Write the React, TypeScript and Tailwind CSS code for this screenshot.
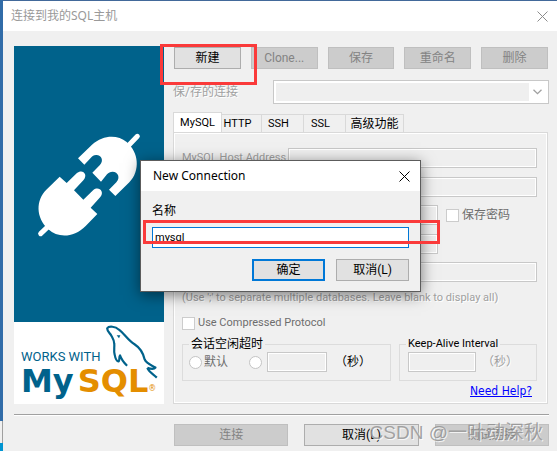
import type { ReactNode } from "react";

const uiFont = "font-['Noto_Sans','Noto_Sans_CJK_SC',sans-serif]";
const formFont = "font-['Roboto','Noto_Sans_CJK_SC',sans-serif]";
const engraved = "text-[#a0a0a0] [text-shadow:1px_1px_0_#fff]";
const fieldStyle =
  "block h-5 min-w-0 border border-[#c8c8c8] bg-[#efefef] px-1 text-[11px] shadow-[inset_0_0_0_1px_#fff] outline-none";

type PushButtonProps = { children: ReactNode; disabled?: boolean; primary?: boolean; className?: string };

function PushButton({ children, disabled, primary, className = "" }: PushButtonProps) {
  const tone = disabled
    ? "border border-[#bfbfbf] bg-[#cccccc] text-[#838383]"
    : primary
      ? "border-2 border-[#0078d7] bg-[#e1e1e1] text-black"
      : "border border-[#adadad] bg-[#e1e1e1] text-black";
  return (
    <button
      type="button"
      disabled={disabled}
      className={`flex h-[22px] items-center justify-center text-[12px] leading-4 whitespace-nowrap ${formFont} ${tone} ${className}`}
    >
      {children}
    </button>
  );
}

function CloseIcon({ className }: { className: string }) {
  return (
    <svg viewBox="0 0 11 11" className={`size-[11px] ${className}`} fill="none" stroke="currentColor">
      <path d="M.5 .5l10 10M10.5 .5l-10 10" />
    </svg>
  );
}

function PlugArt() {
  return (
    <svg viewBox="42 -222 450 828" className="block h-[276px] w-[150px]" aria-hidden="true">
      <g fill="#fff">
        <path d="M234 115L276 74C310 44 352 43 380 66C416 96 422 152 388 187L346 228L327 209L349 187C362 173 354 155 338 155C330 155 326 158 321 163L303 185L277 158L299 136C313 122 304 104 288 105C281 105 277 109 272 114L253 134Z" />
        <path d="M179 170L200 189L230 160C247 145 266 163 250 181L222 211L250 239L280 210C296 197 315 215 301 231L272 263L292 282L257 318C221 354 174 355 145 328C107 292 107 241 139 209Z" />
      </g>
      <g stroke="#fff" strokeWidth="15" strokeLinecap="round">
        <path d="M382 80L412 49M148 316L122 341" />
      </g>
    </svg>
  );
}

function Dolphin() {
  return (
    <svg viewBox="290 30 156 160" className="block h-[54px] w-[53px]" fill="none" aria-hidden="true">
      <path
        d="M412 157C421 160 432 162 436 156C424 149 408 144 404 132C400 114 391 98 374 87C354 75 345 57 328 44C317 34 298 32 293 40C293 49 301 54 305 61C309 69 314 74 314 86C315 96 312 105 315 117C317 128 321 137 326 138C331 137 327 125 331 120C335 132 345 144 352 151M412 157C416 169 429 175 440 186"
        stroke="#00628b"
        strokeWidth="6.5"
        strokeLinejoin="round"
      />
      <path d="M321 60l11 0l-4 9z" fill="#00628b" />
    </svg>
  );
}

function BrandPanel() {
  return (
    <aside className="flex w-[150px] shrink-0 flex-col bg-[#00628b]">
      <div className="flex-1">
        <PlugArt />
      </div>
      <div className="h-[82px] bg-white pt-[3px] pl-[7px] text-[#00628b]">
        <div className="flex h-[42px] items-start justify-between pr-[5px]">
          <span className="pt-[22px] font-['Roboto',sans-serif] text-[13px] leading-5 whitespace-nowrap">
            WORKS WITH
          </span>
          <Dolphin />
        </div>
        <div className="flex items-end font-['DejaVu_Sans',sans-serif] text-[32px] leading-7 font-bold">
          <span>My</span>
          <span className="ml-1 text-[#e48e00]">SQL</span>
          <span className="text-[8px] leading-3 font-normal text-[#e48e00]">®</span>
        </div>
      </div>
    </aside>
  );
}

const tabs = ["MySQL", "HTTP", "SSH", "SSL", "高级功能"];
const tabWidths = ["w-[49px]", "w-[40px]", "w-[42px]", "w-[42px]", "w-[58px]"];

function Tabs() {
  return (
    <div role="tablist" className={`flex items-end text-[11px] leading-4 ${formFont}`}>
      {tabs.map((tab, i) => (
        <button
          key={tab}
          type="button"
          role="tab"
          aria-selected={i === 0}
          className={`border-t border-[#d9d9d9] whitespace-nowrap ${tabWidths[i]} ${
            i === 0 ? "h-5 border-x bg-white" : "h-[18px] border-r bg-[#f0f0f0] pt-px"
          } ${i === 4 ? "text-[12px]" : i === 0 ? "" : "pr-2"}`}
        >
          {tab}
        </button>
      ))}
    </div>
  );
}

function ConnectionForm() {
  return (
    <div
      className={`border border-[#d9d9d9] pt-[15px] pr-[10px] pb-1 pl-2 text-[11px] leading-4 shadow-[inset_0_0_0_1px_#fff] ${formFont}`}
    >
      <div className="flex items-center">
        <label htmlFor="host" className={`w-[106px] shrink-0 whitespace-nowrap ${engraved}`}>
          MySQL Host Address
        </label>
        <input id="host" disabled className={`flex-1 ${fieldStyle}`} />
      </div>
      <div className="mt-[9px] flex pl-[106px]">
        <input aria-label="Username" disabled className={`flex-1 ${fieldStyle}`} />
      </div>
      <div className="mt-2 flex items-center pl-[106px]">
        <input aria-label="Password" type="password" disabled className={`flex-1 ${fieldStyle}`} />
        <label className="flex w-[99px] items-center gap-[3px] pl-2 text-[12px] text-[#6d6d6d]">
          <input type="checkbox" disabled className="size-[13px] appearance-none border border-[#cccccc] bg-white" />
          保存密码
        </label>
      </div>
      <div className="mt-[9px] flex pr-[99px] pl-[106px]">
        <input aria-label="Port" disabled className={`flex-1 ${fieldStyle}`} />
      </div>
      <div className="mt-2 flex pl-[106px]">
        <input aria-label="Databases" disabled className={`flex-1 ${fieldStyle}`} />
      </div>
      <p className={`mt-2 whitespace-nowrap ${engraved}`}>
        (Use ';' to separate multiple databases. Leave blank to display all)
      </p>
      <label className="mt-[9px] flex items-center gap-[3px] text-[#6d6d6d]">
        <input type="checkbox" disabled className="size-[13px] appearance-none border border-[#cccccc] bg-white" />
        Use Compressed Protocol
      </label>
      <div className="mt-[5px] grid grid-cols-[209fr_138fr] gap-2">
        <fieldset className="min-w-0 border border-[#dcdcdc] px-[6px] pb-2">
          <legend className="px-[2px] text-[12px] leading-4">会话空闲超时</legend>
          <div className="flex items-center text-[12px]">
            <label className="flex items-center gap-[2px] text-[#6d6d6d]">
              <input type="radio" name="idle" disabled className="size-[13px] appearance-none rounded-full border border-[#c4c4c4] bg-white" />
              默认
            </label>
            <input
              type="radio"
              name="idle"
              aria-label="自定义"
              disabled
              className="ml-[21px] size-[13px] appearance-none rounded-full border border-[#c4c4c4] bg-white"
            />
            <input aria-label="会话空闲超时" disabled className={`ml-[5px] w-[60px] ${fieldStyle}`} />
            <span className="ml-2">（秒）</span>
          </div>
        </fieldset>
        <fieldset className="min-w-0 border border-[#dcdcdc] px-[6px] pb-2">
          <legend className="px-[2px] leading-4 whitespace-nowrap">Keep-Alive Interval</legend>
          <div className="flex items-center pl-[2px] text-[12px]">
            <input aria-label="Keep-Alive Interval" disabled className={`w-[68px] ${fieldStyle}`} />
            <span className={`ml-[6px] ${engraved}`}>（秒）</span>
          </div>
        </fieldset>
      </div>
      <div className="mt-[2px] flex justify-end pr-[5px]">
        <a href="#help" className="font-['DejaVu_Sans_Condensed','DejaVu_Sans',sans-serif] text-[12px] text-[#0000ff] underline">
          Need Help?
        </a>
      </div>
    </div>
  );
}

function NewConnectionDialog() {
  return (
    <div
      role="dialog"
      aria-label="New Connection"
      className="absolute top-[160px] left-[140px] w-[281px] border border-[#5c5c5c] bg-[#f0f0f0] shadow-[0_3px_14px_rgba(0,0,0,0.5)]"
    >
      <div className="flex h-[30px] items-center justify-between bg-white pr-[10px] pl-3">
        <h2 className="text-[12px] leading-4">New Connection</h2>
        <button type="button" aria-label="Close">
          <CloseIcon className="text-black" />
        </button>
      </div>
      <div className={`px-[11px] pt-3 pb-[10px] ${formFont}`}>
        <label htmlFor="connection-name" className="block text-[12px] leading-4">
          名称
        </label>
        <input
          id="connection-name"
          defaultValue="mysql"
          className="mt-2 block h-[21px] w-full border border-[#0078d7] bg-white px-[2px] text-[11px] outline-none"
        />
        <div className="mt-[11px] flex justify-end gap-[11px]">
          <PushButton primary className="w-[73px]">确定</PushButton>
          <PushButton className="w-[73px]">取消(L)</PushButton>
        </div>
      </div>
    </div>
  );
}

export default function App() {
  return (
    <div className={`relative flex min-h-screen overflow-hidden bg-[#f0f0f0] text-black ${uiFont}`}>
      <div className="flex w-[3px] shrink-0 flex-col bg-[#316ca8]">
        <div className="mt-auto h-[22px] border-r border-[#a0a0a0] bg-[#f0f0f0]" />
        <div className="h-2 bg-[#0095d2]" />
      </div>

      <main className="min-w-0 flex-1 border-t border-[#42699a]">
        <header className="flex h-[30px] items-center justify-between bg-white pr-[9px] pl-2 text-[#999999]">
          <h1 className="text-[12px] leading-4">连接到我的SQL主机</h1>
          <button type="button" aria-label="关闭">
            <CloseIcon className="text-[#8c8c8c]" />
          </button>
        </header>

        <div className="pt-[15px] pr-2 pb-[5px] pl-[11px]">
          <div className="flex gap-[9px]">
            <BrandPanel />
            <div className="min-w-0 flex-1 pt-px">
              <div className="grid grid-cols-5 gap-[10px] px-px">
                <PushButton>新建</PushButton>
                <PushButton disabled>Clone...</PushButton>
                <PushButton disabled>保存</PushButton>
                <PushButton disabled>重命名</PushButton>
                <PushButton disabled>删除</PushButton>
              </div>
              <div className="mt-[11px] flex items-center">
                <label
                  htmlFor="saved"
                  className={`w-[100px] shrink-0 text-[12px] leading-4 ${formFont} ${engraved}`}
                >
                  保/存的连接
                </label>
                <div className="flex h-6 flex-1 items-center border border-[#c8c8c8] bg-white p-[2px]">
                  <select id="saved" disabled className="h-[18px] min-w-0 flex-1 appearance-none bg-[#efefef] opacity-100" />
                  <svg viewBox="0 0 9 6" className="mx-[4px] h-[6px] w-[9px]" fill="none" stroke="#a0a0a0" strokeWidth="1.3" aria-hidden="true">
                    <path d="M.5 .7l4 4l4-4" />
                  </svg>
                </div>
              </div>
              <div className="mt-2 pr-px">
                <Tabs />
                <ConnectionForm />
              </div>
            </div>
          </div>

          <hr className="mt-[10px] border-t border-[#a0a0a0] shadow-[0_1px_0_#fff]" />
          <div className="mt-[9px] grid grid-cols-3 gap-4 pl-[160px]">
            <PushButton disabled>连接</PushButton>
            <PushButton>取消(L)</PushButton>
            <PushButton disabled>测试连接</PushButton>
          </div>
        </div>
      </main>

      <NewConnectionDialog />

      <div className="pointer-events-none absolute top-[44px] left-[160px] h-[41px] w-[97px] border-3 border-[#fa3a3a]" />
      <div className="pointer-events-none absolute top-[220px] left-[143px] h-[24px] w-[297px] border-3 border-[#fa3a3a]" />
      <div className="pointer-events-none absolute right-[14px] bottom-1 font-['Liberation_Sans','Noto_Sans_CJK_SC',sans-serif] text-[19px] leading-7 whitespace-nowrap text-[#8e8e8e]/80 [text-shadow:1px_1px_0_rgba(255,255,255,0.75)]">
        CSDN @一叶动深秋
      </div>
    </div>
  );
}
